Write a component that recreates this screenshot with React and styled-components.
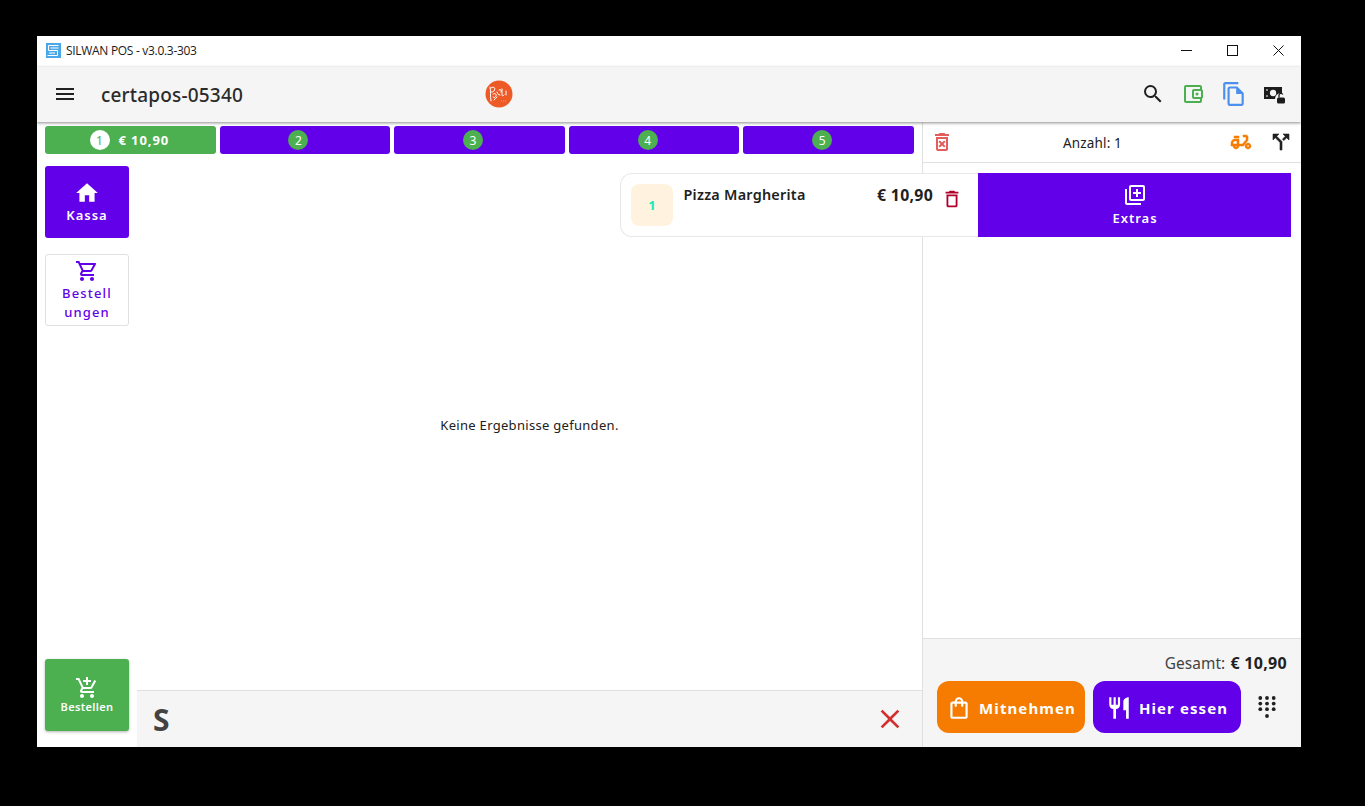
import React from "react";
import styled, { createGlobalStyle } from "styled-components";
import {
  MdMenu, MdSearch, MdOutlineAccountBalanceWallet, MdOutlineFileCopy, MdOutlineDeleteForever,
  MdOutlineDeliveryDining, MdCallSplit, MdHome, MdOutlineShoppingCart, MdAddShoppingCart,
  MdOutlineDelete, MdOutlineLibraryAdd, MdOutlineShoppingBag, MdRestaurant, MdClose,
} from "react-icons/md";

const Global = createGlobalStyle`
  html, body { margin: 0; padding: 0; background: #000; height: 100%; overflow: hidden; }
  * { box-sizing: border-box; }
  body { font-family: "Noto Sans", sans-serif; color: #212121; }
`;

const PURPLE = "#6200ea";
const GREEN = "#4caf50";

const Win = styled.div`
  width: 1264px; height: 711px; margin: 36px 0 0 37px; background: #fff;
  display: flex; flex-direction: column; overflow: hidden;
`;
const TitleBar = styled.div`
  height: 31px; flex: none; background: #fff; display: flex; align-items: center; padding: 0 0 2px 9px;
`;
const TitleText = styled.span`
  font: 12px/1 "Open Sans", "Noto Sans", sans-serif; margin-left: 5px; color: #1a1a1a; flex: 1; letter-spacing: -0.3px;
`;
const WinControls = styled.div`display: flex; height: 100%;`;
const WinButton = styled.div`
  width: 46px; display: flex; align-items: center; justify-content: center; color: #111;
`;
const AppBar = styled.header`
  height: 55px; flex: none; background: #f5f5f5; display: flex; align-items: center;
  box-shadow: 0 1px 3px rgba(0,0,0,.45); position: relative; z-index: 3; padding-left: 16px;
`;
const MenuSlot = styled.div`display: flex; margin-bottom: 2px;`;
const AppName = styled.div`
  font-size: 19px; font-weight: 500; color: #2b2b2b; margin: 1px 0 0 24px; width: 384px; letter-spacing: .18px;
`;
const LogoWrap = styled.div`width: 28px; height: 28px; flex: none; margin-bottom: 2px;`;
const AppActions = styled.div`
  margin-left: auto; display: flex; align-items: center; gap: 16px; padding: 0 14px 2px 0;
`;
const Body = styled.div`flex: 1; display: flex; min-height: 0;`;
const LeftPane = styled.div`
  width: 886px; flex: none; border-right: 1px solid #e0e0e0; display: flex; flex-direction: column;
`;
const Tabs = styled.div`
  height: 39px; flex: none; padding: 4px 8px 0 8px; display: flex; gap: 4px; background: #fff;
`;
const Tab = styled.div`
  flex: 1 1 0; height: 28px; border-radius: 3px; background: ${p => p.$active ? GREEN : PURPLE};
  display: flex; align-items: center; justify-content: center; gap: 9px; color: #fff;
  font-size: 13px; font-weight: 700; letter-spacing: .9px;
`;
const TabPrice = styled.span`margin-right: 2px;`;
const TabNum = styled.span`
  width: 20px; height: 20px; border-radius: 50%; background: ${p => p.$active ? "#fff" : GREEN};
  color: ${p => p.$active ? GREEN : "#fff"}; font-size: 12px; font-weight: 400; letter-spacing: 0;
  display: flex; align-items: center; justify-content: center;
  margin-right: ${p => p.$active ? "0" : "13px"};
`;
const LeftMain = styled.div`flex: 1; display: flex; min-height: 0;`;
const Sidebar = styled.nav`
  width: 100px; flex: none; padding: 5px 8px 16px; display: flex; flex-direction: column; gap: 16px;
`;
const NavButton = styled.div`
  width: 84px; height: 72px; border-radius: 3px; display: flex; flex-direction: column;
  align-items: center; justify-content: center; text-align: center;
  font-size: 13px; font-weight: 600; letter-spacing: 1px; line-height: 19px;
  background: ${p => p.$bg || "#fff"}; color: ${p => p.$fg || "#fff"};
  padding: 0 4px;
`;
const OutlineNav = styled(NavButton)`
  border: 1px solid #e0e0e0; font-weight: 500; letter-spacing: 1.15px; gap: 1px;
`;
const OrderNav = styled(NavButton)`
  margin-top: auto; font-size: 11px; letter-spacing: .35px; line-height: 14px;
  box-shadow: 0 1px 3px rgba(0,0,0,.3);
`;
const Center = styled.div`flex: 1; display: flex; flex-direction: column; min-width: 0;`;
const Results = styled.div`
  flex: 1; display: flex; align-items: center; justify-content: center; font-size: 13px;
  letter-spacing: .3px; color: #212121; padding-bottom: 1px;
`;
const SearchBar = styled.div`
  height: 57px; flex: none; background: #f5f5f5; border-top: 1px solid #e0e0e0;
  display: flex; align-items: center; justify-content: space-between; padding: 0 16px;
  font-size: 30px; font-weight: 700; color: #424242;
`;
const RightPane = styled.div`flex: 1; display: flex; flex-direction: column; min-width: 0;`;
const RightHead = styled.div`
  height: 41px; flex: none; border-bottom: 1px solid #e0e0e0; display: flex; align-items: center;
  padding: 0 8px 0 7px; font-size: 13.5px; background: #fff;
`;
const Count = styled.div`flex: 1; text-align: center; color: #212121; padding: 1px 0 0 2px; letter-spacing: .15px;`;
const HeadIcons = styled.div`display: flex; align-items: center; gap: 16px; color: #212121;`;
const Bike = styled(MdOutlineDeliveryDining)`
  & path:not([fill="none"]) { stroke: currentColor; stroke-width: .5px; }
`;
const Split = styled(MdCallSplit)`
  & path:not([fill="none"]) { stroke: currentColor; stroke-width: .6px; }
`;
const ItemRow = styled.div`
  position: relative; margin-top: 10px; display: flex; justify-content: flex-end; padding-right: 10px;
`;
const Extras = styled.div`
  width: 313px; height: 64px; background: ${PURPLE}; color: #fff; display: flex; flex-direction: column;
  align-items: center; justify-content: center; font-size: 13px; font-weight: 600; letter-spacing: 1px;
  line-height: 18px; gap: 2px; padding: 0 0 1px 1px;
`;
const ItemCard = styled.div`
  position: absolute; top: 0; left: -303px; width: 358px; height: 64px; background: #fff;
  border: 1px solid #e8e8e8; border-radius: 12px 0 0 12px; border-right: none;
  display: flex; padding: 10px; z-index: 2;
`;
const Qty = styled.div`
  width: 42px; height: 42px; border-radius: 8px; background: #fff3e0; color: #1de9b6;
  font-size: 13px; font-weight: 700; display: flex; align-items: center; justify-content: center; flex: none;
`;
const ItemName = styled.div`
  font-size: 14.4px; font-weight: 600; margin-left: 10.5px; flex: 1; letter-spacing: .25px; line-height: 22px;
`;
const ItemPrice = styled.div`
  font-size: 15.8px; font-weight: 700; line-height: 22px; letter-spacing: .3px; margin-right: 8px;
`;
const TrashSlot = styled.div`color: #b0002a; width: 24px; margin-right: 3px; margin-top: 4px;`;
const RightFill = styled.div`flex: 1;`;
const Footer = styled.div`
  height: 109px; flex: none; background: #f5f5f5; border-top: 1px solid #e0e0e0; display: flex;
  flex-direction: column; padding: 14px 14px 0;
`;
const Total = styled.div`
  height: 21px; text-align: right; font-size: 15.4px; color: #424242; line-height: 20px; letter-spacing: .1px;
  & b { color: #212121; font-weight: 700; font-size: 16px; letter-spacing: .3px; margin-left: 1px; }
`;
const Actions = styled.div`display: flex; gap: 8px; align-items: center; margin-top: 7px;`;
const OrderBtn = styled.div`
  width: 148px; height: 52px; border-radius: 12px; background: ${p => p.$bg}; color: #fff;
  display: flex; align-items: center; justify-content: center; gap: 7px;
  font-size: 15px; font-weight: 700; letter-spacing: 1.1px; padding-top: 1px;
`;
const DialSlot = styled.div`margin-left: 9px; display: flex;`;

const Logo = () => (
  <svg width="28" height="28" viewBox="0 0 28 28">
    <circle cx="14" cy="14" r="13.5" fill="#ee5a26" />
    <path d="M5 7c1 4 0 9 1 14M6 8c3-2 5 0 3 3-1 1-2 1-3 1M8 14c2-1 4 0 3 2s-3 2-3 1M9 20l3-3M12 12c1 2 1 3 3 3M14 10c2-1 3 0 2 2M17 9v6c0 1 1 1 2 0M21 11v4" fill="none" stroke="#fff" strokeWidth="1" strokeLinecap="round" />
    <path d="M16 21h.6M18 21h.6M20 21h.6" stroke="#fff" strokeWidth=".7" />
  </svg>
);
const AppGlyph = () => (
  <svg width="15" height="15" viewBox="0 0 15 15">
    <rect width="15" height="15" fill="#4aa8e8" />
    <path d="M12.5 2.5h-10v5h9v5h-10M4.5 5h8M3 10h6" fill="none" stroke="#fff" strokeWidth="1" />
  </svg>
);
const CashLock = () => (
  <svg width="24" height="24" viewBox="1 0 24 24">
    <rect x="2" y="5" width="18" height="12" fill="#1c1c1c" />
    <circle cx="11" cy="11" r="3.2" fill="#f5f5f5" />
    <path d="M4 8h2M4 14h2" stroke="#f5f5f5" />
    <circle cx="19" cy="17" r="6" fill="#f5f5f5" />
    <rect x="15" y="15.5" width="8" height="6" rx="1.5" fill="#1c1c1c" />
    <path d="M17 15.5v-2.2a2 2 0 0 1 3.8-.8" fill="none" stroke="#1c1c1c" strokeWidth="1.3" />
  </svg>
);
const DialDots = () => (
  <svg width="18" height="24" viewBox="0 0 18 24" fill="#212121">
    {[3, 8.6, 14.2].map(y => [2.3, 9, 15.7].map(x => <circle key={`${x}-${y}`} cx={x} cy={y} r="1.9" />))}
    <circle cx="9" cy="21" r="1.9" />
  </svg>
);

export default function App() {
  return (
    <>
      <Global />
      <Win>
        <TitleBar>
          <AppGlyph />
          <TitleText>SILWAN POS - v3.0.3-303</TitleText>
          <WinControls>
            <WinButton><svg width="11" height="11" viewBox="0 0 11 11"><path d="M0 5.5h11" stroke="#111" /></svg></WinButton>
            <WinButton><svg width="11" height="11" viewBox="0 0 11 11"><rect x=".5" y=".5" width="10" height="10" fill="none" stroke="#111" /></svg></WinButton>
            <WinButton><svg width="11" height="11" viewBox="0 0 11 11"><path d="M.5.5l10 10M10.5.5l-10 10" stroke="#111" /></svg></WinButton>
          </WinControls>
        </TitleBar>
        <AppBar>
          <MenuSlot><MdMenu size={24} color="#212121" /></MenuSlot>
          <AppName>certapos-05340</AppName>
          <LogoWrap><Logo /></LogoWrap>
          <AppActions>
            <MdSearch size={24} color="#212121" />
            <MdOutlineAccountBalanceWallet size={24} color={GREEN} />
            <MdOutlineFileCopy size={26} color="#4d8fee" />
            <CashLock />
          </AppActions>
        </AppBar>
        <Body>
          <LeftPane>
            <Tabs>
              <Tab $active><TabNum $active>1</TabNum><TabPrice>€ 10,90</TabPrice></Tab>
              {[2, 3, 4, 5].map(n => <Tab key={n}><TabNum>{n}</TabNum></Tab>)}
            </Tabs>
            <LeftMain>
              <Sidebar>
                <NavButton $bg={PURPLE}><MdHome size={26} />Kassa</NavButton>
                <OutlineNav $fg={PURPLE}><MdOutlineShoppingCart size={24} /><span>Bestell<br />ungen</span></OutlineNav>
                <OrderNav $bg={GREEN}><MdAddShoppingCart size={24} />Bestellen</OrderNav>
              </Sidebar>
              <Center>
                <Results>Keine Ergebnisse gefunden.</Results>
                <SearchBar>S<MdClose size={32} color="#d32f2f" /></SearchBar>
              </Center>
            </LeftMain>
          </LeftPane>
          <RightPane>
            <RightHead>
              <MdOutlineDeleteForever size={24} color="#e35d5d" />
              <Count>Anzahl: 1</Count>
              <HeadIcons>
                <Bike size={24} color="#f57c00" />
                <Split size={24} color="#212121" />
              </HeadIcons>
            </RightHead>
            <ItemRow>
              <ItemCard>
                <Qty>1</Qty>
                <ItemName>Pizza Margherita</ItemName>
                <ItemPrice>€ 10,90</ItemPrice>
                <TrashSlot><MdOutlineDelete size={22} /></TrashSlot>
              </ItemCard>
              <Extras><MdOutlineLibraryAdd size={24} />Extras</Extras>
            </ItemRow>
            <RightFill />
            <Footer>
              <Total>Gesamt: <b>€ 10,90</b></Total>
              <Actions>
                <OrderBtn $bg="#f57c00"><MdOutlineShoppingBag size={26} />Mitnehmen</OrderBtn>
                <OrderBtn $bg={PURPLE}><MdRestaurant size={26} />Hier essen</OrderBtn>
                <DialSlot><DialDots /></DialSlot>
              </Actions>
            </Footer>
          </RightPane>
        </Body>
      </Win>
    </>
  );
}
